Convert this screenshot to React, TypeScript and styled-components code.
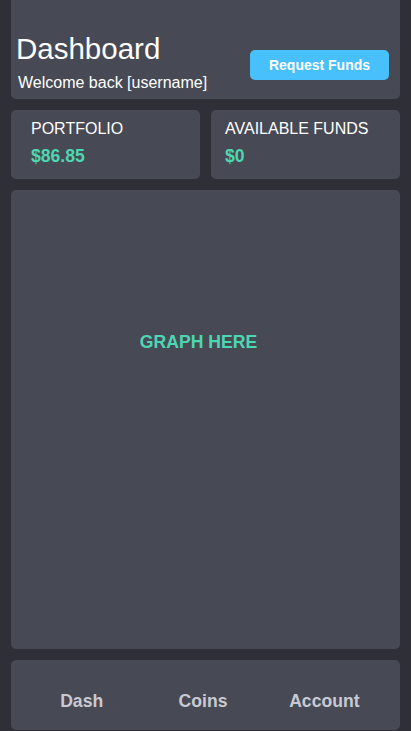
import styled, { createGlobalStyle } from 'styled-components';

const GlobalStyle = createGlobalStyle`
  html, body {
    margin: 0;
    padding: 0;
    background: #2f2f38;
    font-family: 'Liberation Sans', Arial, sans-serif;
  }
`;

const Page = styled.div`
  height: 731px;
  box-sizing: border-box;
  padding: 0 11px 1px;
  display: flex;
  flex-direction: column;
  gap: 11px;
  overflow: hidden;
`;

const Card = styled.div`
  background: #474954;
  border-radius: 5px;
`;

const Header = styled(Card)`
  height: 99px;
  box-sizing: border-box;
  border-radius: 0 0 5px 5px;
  padding: 32px 11px 7px 5px;
  display: flex;
  align-items: flex-start;
  justify-content: space-between;
`;

const TitleBlock = styled.div`
  display: flex;
  flex-direction: column;
  gap: 9px;
`;

const Title = styled.h1`
  margin: 0;
  font-size: 29.5px;
  font-weight: 400;
  line-height: 33px;
  color: #ffffff;
`;

const Welcome = styled.p`
  margin: 0 0 0 2px;
  font-size: 16px;
  line-height: 18px;
  color: #ffffff;
`;

const RequestButton = styled.button`
  margin-top: 18px;
  width: 139px;
  height: 30px;
  border: none;
  border-radius: 5px;
  background: #47c0fb;
  color: #ffffff;
  font-family: inherit;
  font-weight: 700;
  font-size: 14px;
`;

const Stats = styled.div`
  display: grid;
  grid-template-columns: 1fr 1fr;
  gap: 11px;
`;

const StatCard = styled(Card)<{ $inset: number }>`
  height: 69px;
  box-sizing: border-box;
  padding: 10px 10px 0 ${p => p.$inset}px;
  display: flex;
  flex-direction: column;
  gap: 8px;
`;

const StatLabel = styled.span`
  font-size: 16px;
  line-height: 18px;
  color: #ffffff;
`;

const StatValue = styled.span`
  font-size: 17.6px;
  line-height: 20px;
  font-weight: 700;
  color: #4dd6b2;
`;

const Graph = styled(Card)`
  height: 459px;
  box-sizing: border-box;
  padding: 142px 14px 0 0;
  text-align: center;
`;

const GraphLabel = styled.span`
  font-size: 17.6px;
  line-height: 20px;
  font-weight: 700;
  color: #4dd6b2;
`;

const Nav = styled(Card)`
  height: 70px;
  box-sizing: border-box;
  padding: 31px 15px 0 10px;
  display: grid;
  grid-template-columns: repeat(3, 1fr);
  align-items: start;
`;

const NavItem = styled.a`
  text-align: center;
  font-size: 17.6px;
  line-height: 20px;
  font-weight: 700;
  color: #c9c9d3;
  text-decoration: none;
`;

export default function App() {
  return (
    <>
      <GlobalStyle />
      <Page>
        <Header>
          <TitleBlock>
            <Title>Dashboard</Title>
            <Welcome>Welcome back [username]</Welcome>
          </TitleBlock>
          <RequestButton>Request Funds</RequestButton>
        </Header>
        <Stats>
          <StatCard $inset={20}>
            <StatLabel>PORTFOLIO</StatLabel>
            <StatValue>$86.85</StatValue>
          </StatCard>
          <StatCard $inset={14}>
            <StatLabel>AVAILABLE FUNDS</StatLabel>
            <StatValue>$0</StatValue>
          </StatCard>
        </Stats>
        <Graph>
          <GraphLabel>GRAPH HERE</GraphLabel>
        </Graph>
        <Nav>
          <NavItem>Dash</NavItem>
          <NavItem>Coins</NavItem>
          <NavItem>Account</NavItem>
        </Nav>
      </Page>
    </>
  );
}
